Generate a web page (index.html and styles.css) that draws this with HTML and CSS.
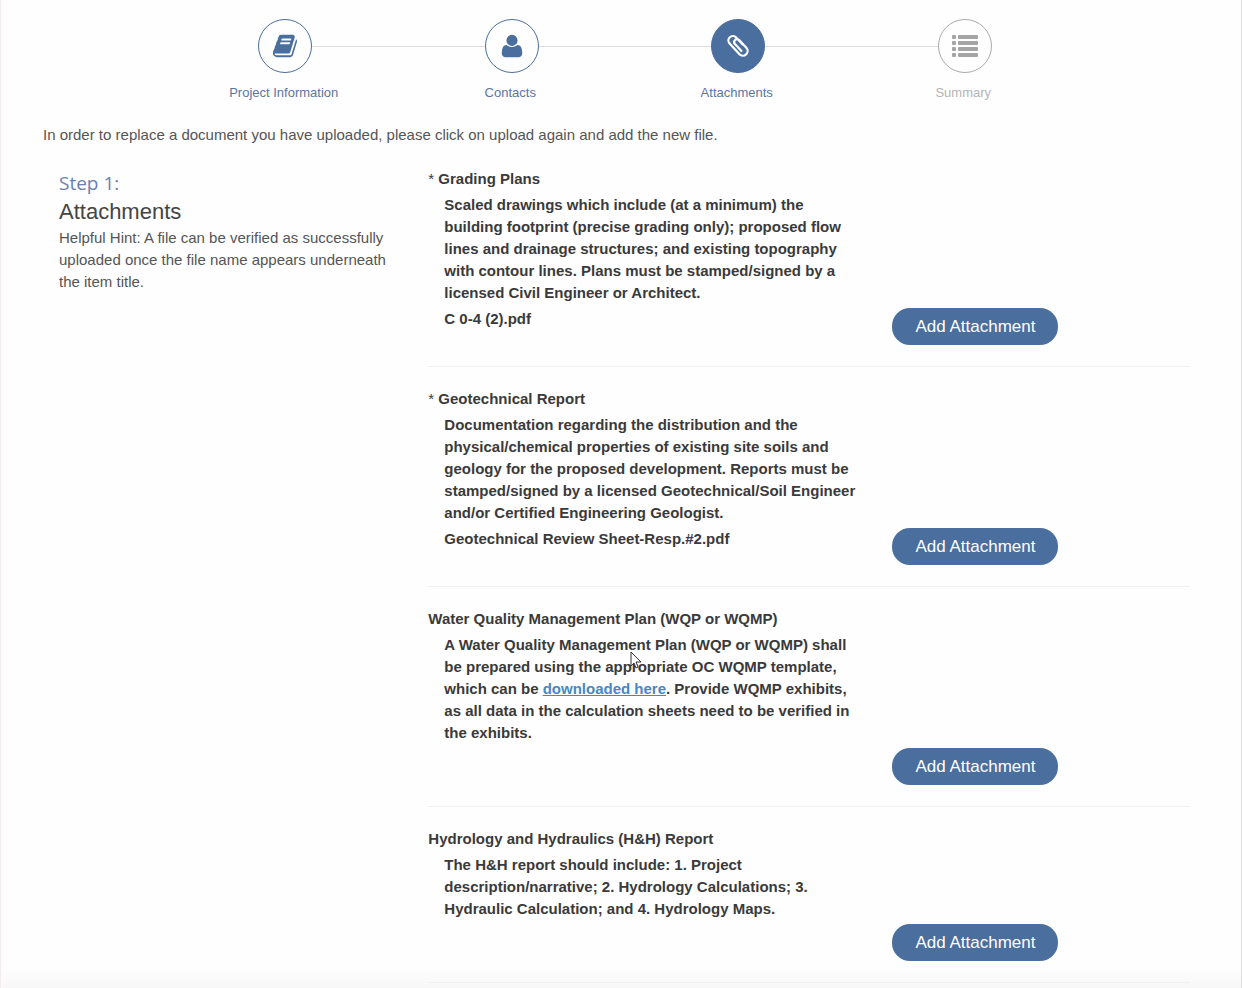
FILE: index.html
```html
<!doctype html>
<html lang="en">
<head>
    <meta charset="utf-8">
    <meta name="viewport" content="width=device-width, initial-scale=1">
    <title>Attachments</title>
    <link rel="stylesheet" href="styles.css">
</head>

<body>
    <div class="page">
      <ol class="steps">
        <li class="step">
          <div class="marker">
            <a class="circle" href="#project" aria-label="Project Information">
              <svg width="26" height="26" viewBox="0 0 1664 1792"><path fill="currentColor" d="M1639 478q40 57 18 129l-275 906q-19 64-76.500 107.500t-122.500 43.500h-923q-77 0-148.500-53.500t-99.500-131.500q-24-67-2-127 0-4 3-27t4-37q1-8-3-21.500t-3-19.500q2-11 8-21t16.500-23.500 16.500-23.500q23-38 45-91.500t30-91.500q3-10 .5-30t-.5-28q3-11 17-28t17-23q21-36 42-92t25-90q1-9-2.500-32t.5-28q4-13 22-30.500t22-22.500q19-26 42.500-84.500t27.500-96.500q1-8-3-25.500t-2-26.500q2-8 9-18t18-23 17-21q8-12 16.500-30.500t15-35 16-36 19.500-32 26.500-23.500 36-11.500 47.500 5.500l-1 3q38-9 51-9h761q74 0 114 56t18 130l-274 906q-36 119-71.500 153.500t-128.500 34.500h-869q-27 0-38 15-11 16-1 43 24 70 144 70h923q29 0 56-15.500t35-41.500l300-987q7-22 5-57 38 15 59 43zm-1064 2q-4 13 2 22.500t20 9.500h608q13 0 25.500-9.500t16.500-22.500l21-64q4-13-2-22.500t-20-9.500h-608q-13 0-25.500 9.500t-16.500 22.500zm-83 256q-4 13 2 22.500t20 9.500h608q13 0 25.500-9.500t16.500-22.500l21-64q4-13-2-22.500t-20-9.500h-608q-13 0-25.500 9.500t-16.500 22.500z"/></svg>
            </a>
          </div>
          <span class="step-label">Project Information</span>
        </li>
        <li class="step">
          <div class="marker">
            <a class="circle" href="#contacts" aria-label="Contacts">
              <svg width="28" height="26" viewBox="0 0 1792 1792"><path fill="currentColor" d="M1600 1399q0 109-62.500 187t-150.500 78h-982q-88 0-150.500-78t-62.500-187q0-85 8.500-160.500t31.500-152 58.500-131 94-89 134.500-34.500q170 128 377 128t377-128q76 0 134.500 34.500t94 89 58.500 131 31.500 152 8.500 160.500zm-320-887q0 159-112.500 271.500t-271.500 112.500-271.500-112.500-112.500-271.500 112.500-271.500 271.500-112.500 271.500 112.500 112.500 271.500z"/></svg>
            </a>
          </div>
          <span class="step-label">Contacts</span>
        </li>
        <li class="step active">
          <div class="marker">
            <a class="circle" href="#attachments" aria-label="Attachments" aria-current="step">
              <svg width="28" height="28" viewBox="0 0 28 28"><g transform="rotate(-43 14 14)" fill="none" stroke="currentColor" stroke-width="2.200" stroke-linecap="round"><path d="M18.500 16V6.500a4.500 4.500 0 0 0-9 0V21a4.700 4.700 0 0 0 9.400 0V10.500a2.900 2.900 0 0 0-5.800 0V20"/></g></svg>
            </a>
          </div>
          <span class="step-label">Attachments</span>
        </li>
        <li class="step disabled">
          <div class="marker">
            <a class="circle" href="#summary" aria-label="Summary">
              <svg width="26" height="22" viewBox="0 0 26 22" fill="currentColor">
                <rect x="0" y="0" width="4" height="4" rx="1"/><rect x="6" y="0" width="20" height="4" rx="1"/>
                <rect x="0" y="6" width="4" height="4" rx="1"/><rect x="6" y="6" width="20" height="4" rx="1"/>
                <rect x="0" y="12" width="4" height="4" rx="1"/><rect x="6" y="12" width="20" height="4" rx="1"/>
                <rect x="0" y="18" width="4" height="4" rx="1"/><rect x="6" y="18" width="20" height="4" rx="1"/>
              </svg>
            </a>
          </div>
          <span class="step-label">Summary</span>
        </li>
      </ol>

      <p class="intro">In order to replace a document you have uploaded, please click on upload again and add the new file.</p>

      <div class="content">
        <div class="side">
          <h2 class="step-number">Step 1:</h2>
          <h1 class="step-title">Attachments</h1>
          <p class="hint">Helpful Hint: A file can be verified as successfully uploaded once the file name appears underneath the item title.</p>
        </div>

        <div class="list">
          <div class="item">
            <h3 class="item-title"><span class="required">*</span> Grading Plans</h3>
            <p class="desc">Scaled drawings which include (at a minimum) the building footprint (precise grading only); proposed flow lines and drainage structures; and existing topography with contour lines. Plans must be stamped/signed by a licensed Civil Engineer or Architect.</p>
            <p class="file">C 0-4 (2).pdf</p>
            <button type="button" class="btn">Add Attachment</button>
          </div>

          <div class="item">
            <h3 class="item-title"><span class="required">*</span> Geotechnical Report</h3>
            <p class="desc">Documentation regarding the distribution and the physical/chemical properties of existing site soils and geology for the proposed development. Reports must be stamped/signed by a licensed Geotechnical/Soil Engineer and/or Certified Engineering Geologist.</p>
            <p class="file">Geotechnical Review Sheet-Resp.#2.pdf</p>
            <button type="button" class="btn">Add Attachment</button>
          </div>

          <div class="item">
            <h3 class="item-title">Water Quality Management Plan (WQP or WQMP)</h3>
            <p class="desc">A Water Quality Management Plan (WQP or WQMP) shall be prepared using the appropriate OC WQMP template, which can be <a href="#wqmp">downloaded here</a>. Provide WQMP exhibits, as all data in the calculation sheets need to be verified in the exhibits.</p>
            <button type="button" class="btn">Add Attachment</button>
          </div>

          <div class="item">
            <h3 class="item-title">Hydrology and Hydraulics (H&amp;H) Report</h3>
            <p class="desc">The H&amp;H report should include: 1. Project description/narrative; 2. Hydrology Calculations; 3. Hydraulic Calculation; and 4. Hydrology Maps.</p>
            <button type="button" class="btn">Add Attachment</button>
          </div>
        </div>
      </div>

      <svg class="pointer" width="12" height="19" viewBox="0 0 12 19"><path fill="#fff" stroke="#333" d="M1 1v14l3-3 2 5 2-1-2-5h5z"/></svg>
    </div>
</body>
</html>
```
FILE: styles.css
```css
* {
    box-sizing: border-box;
}

body {
    margin: 0;
    font-family: "Liberation Sans", Arial, sans-serif;
    font-size: 15px;
    line-height: 22px;
    color: #555;
}

h1, h2, h3, p, ol {
    margin: 0;
    padding: 0;
}

.page {
    position: relative;
    min-height: 100vh;
    padding: 19px 51px 5px 42px;
    border-left: 1px solid #f3ecee;
    border-right: 1px solid #dedede;
    background: linear-gradient(to top, #f7f7f7, #fefefe 20px);
}

/* progress steps */
.steps {
    display: flex;
    padding: 0 112px 0 129px;
    list-style: none;
}

.step {
    flex: 1;
    color: #5b75a3;
    text-align: center;
}

.marker {
    display: flex;
    align-items: center;
    margin-bottom: 10px;
}

.marker::before,
.marker::after {
    content: "";
    flex: 1;
    height: 1px;
    background: #ddd;
}

.step:first-child .marker::before,
.step:last-child .marker::after {
    background: none;
}

.circle {
    display: flex;
    align-items: center;
    justify-content: center;
    width: 54px;
    height: 54px;
    border: 1px solid #4a6e9e;
    border-radius: 50%;
    color: #4a6e9e;
}

.active .circle {
    background: #4a6e9e;
    color: #fff;
}

.disabled .circle {
    border-color: #aaa;
    color: #a5a5a5;
}

.step-label {
    display: block;
    padding-right: 3px;
    font-size: 13px;
    line-height: 20px;
}

.disabled .step-label {
    color: #b5b5b5;
}

.intro {
    margin: 21px 0 1px;
}

/* two columns */
.content {
    display: grid;
    grid-template-columns: 30% 1fr;
    column-gap: 30px;
    padding-left: 16px;
}

.side {
    padding-top: 25px;
}

.step-number {
    font-family: "Open Sans", sans-serif;
    font-size: 19px;
    font-weight: normal;
    line-height: 22px;
    color: #6a7fae;
}

.step-title {
    padding: 5px 0 2px;
    font-size: 22px;
    font-weight: normal;
    line-height: 26px;
    color: #444;
}

.list {
    color: #3a3a3a;
}

.item {
    display: grid;
    grid-template-columns: 57% 1fr;
    column-gap: 30px;
    row-gap: 4px;
    padding: 21px 0;
    border-bottom: 1px solid #f0f0f0;
}

.item-title {
    grid-column: 1;
    font-size: 15px;
    line-height: 22px;
}

.required {
    font-weight: normal;
}

.desc,
.file {
    grid-column: 1;
    padding-left: 16px;
    font-weight: bold;
}

.desc a {
    color: #4a86c5;
}

.btn {
    grid-column: 2;
    grid-row: 3;
    justify-self: start;
    height: 37px;
    padding: 0 23px;
    border: 0;
    border-radius: 18px;
    background: #4a6e9e;
    color: #fff;
    font-family: inherit;
    font-size: 17px;
}

/* mouse pointer over the text */
.pointer {
    position: absolute;
    top: 651px;
    left: 629px;
}
```
